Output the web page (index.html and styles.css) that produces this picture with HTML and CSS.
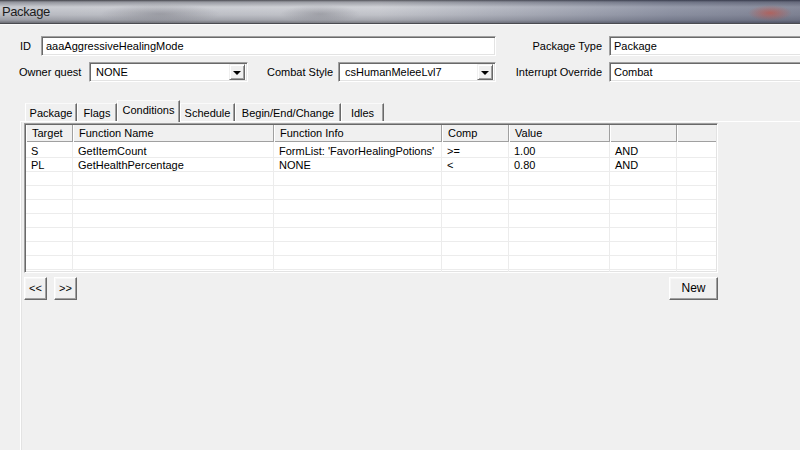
FILE: index.html
```html
<!DOCTYPE html>
<html lang="en">
<head>
  <meta charset="UTF-8" />
  <title>Package</title>
  <link rel="stylesheet" href="styles.css">
</head>
<body>
  <div class="window">
    <div class="titlebar"><span class="title">Package</span></div>

    <div class="form">
      <div class="row">
        <span class="lbl lbl-id">ID</span>
        <div class="field field-id">aaaAggressiveHealingMode</div>
        <span class="lbl lbl-right">Package Type</span>
        <div class="field field-wide">Package</div>
      </div>
      <div class="row">
        <span class="lbl lbl-owner">Owner quest</span>
        <div class="field combo combo-owner">
          <span class="combo-text">NONE</span>
          <span class="drop"><span class="arrow"></span></span>
        </div>
        <span class="lbl lbl-style">Combat Style</span>
        <div class="field combo combo-style">
          <span class="combo-text">csHumanMeleeLvl7</span>
          <span class="drop"><span class="arrow"></span></span>
        </div>
        <span class="lbl lbl-right">Interrupt Override</span>
        <div class="field field-wide">Combat</div>
      </div>
    </div>

    <div class="tabs">
      <div class="tab" style="width:52px">Package</div>
      <div class="tab" style="width:40px">Flags</div>
      <div class="tab active" style="width:63px">Conditions</div>
      <div class="tab" style="width:55px">Schedule</div>
      <div class="tab" style="width:106px">Begin/End/Change</div>
      <div class="tab" style="width:43px">Idles</div>
    </div>

    <div class="panel">
      <div class="list">
        <div class="list-head">
          <div class="hcell">Target</div>
          <div class="hcell">Function Name</div>
          <div class="hcell">Function Info</div>
          <div class="hcell">Comp</div>
          <div class="hcell">Value</div>
          <div class="hcell"></div>
          <div class="hcell last"></div>
        </div>
        <div class="list-body" id="rows"></div>
      </div>

      <div class="buttons">
        <div class="nav">
          <div class="btn btn-small">&lt;&lt;</div>
          <div class="btn btn-small">&gt;&gt;</div>
        </div>
        <div class="btn btn-new">New</div>
      </div>
    </div>
  </div>

  <script>
    // condition rows; the rest of the grid stays empty
    var conditions = [
      ['S', 'GetItemCount', "FormList: 'FavorHealingPotions'", '>=', '1.00', 'AND', ''],
      ['PL', 'GetHealthPercentage', 'NONE', '<', '0.80', 'AND', '']
    ];

    var body = document.getElementById('rows');
    for (var i = 0; i < 10; i++) {
      var data = conditions[i] || ['', '', '', '', '', '', ''];
      var row = document.createElement('div');
      row.className = 'lrow';
      data.forEach(function (text) {
        var cell = document.createElement('div');
        cell.className = 'cell';
        cell.textContent = text;
        row.appendChild(cell);
      });
      body.appendChild(row);
    }
  </script>
</body>
</html>
```

FILE: styles.css
```css
body {
  margin: 0;
  background-color: #f0f0f0;
  font-family: 'Liberation Sans', Arial, sans-serif;
  font-size: 11px;
  color: #000;
  overflow: hidden;
}
.window {
  width: 840px;
  height: 450px;
}

/* glass caption bar */
.titlebar {
  height: 23px;
  border-bottom: 1px solid #4a4b50;
  box-shadow: 0 1px 0 #fafafa;
  background:
    radial-gradient(ellipse 22px 8px at 770px 13px, rgba(210, 70, 50, 0.55), rgba(210, 70, 50, 0)),
    radial-gradient(ellipse 60px 10px at 160px 14px, rgba(90, 90, 100, 0.35), rgba(90, 90, 100, 0)),
    radial-gradient(ellipse 40px 9px at 320px 14px, rgba(80, 80, 90, 0.3), rgba(80, 80, 90, 0)),
    linear-gradient(90deg, rgba(255, 255, 255, 0) 0%, rgba(255, 255, 255, 0.12) 45%, rgba(50, 60, 95, 0.35) 80%, rgba(45, 50, 80, 0.45) 100%),
    linear-gradient(180deg, #3d3e45 0, #8f9199 2px, #c9cbd1 7px, #b7b9c0 15px, #9b9da5 20px, #6c6d74 23px);
}
.title {
  display: inline-block;
  padding: 4px 0 0 2px;
  font-size: 13px;
  color: #1c1c1c;
  letter-spacing: -0.4px;
}

/* top form */
.form {
  padding-top: 12px;
  display: flex;
  flex-direction: column;
  gap: 6px;
}
.row {
  display: flex;
  align-items: center;
  height: 20px;
}
.lbl {
  white-space: nowrap;
}
.lbl-id {
  width: 21px;
  padding-left: 20px;
}
.lbl-owner {
  width: 70px;
  padding-left: 19px;
}
.lbl-style {
  width: 71px;
  padding-left: 19px;
}
.lbl-right {
  width: 106px;
  padding-right: 7px;
  text-align: right;
}
.field {
  box-sizing: border-box;
  height: 20px;
  background: #fff;
  border: 1px solid;
  border-color: #a0a0a0 #fff #fff #a0a0a0;
  box-shadow: inset 1px 1px 0 #696969, inset -1px -1px 0 #e3e3e3;
  padding-left: 4px;
  line-height: 18px;
  white-space: nowrap;
  overflow: hidden;
}
.field-id {
  width: 455px;
}
.field-wide {
  width: 220px;
}
.combo {
  display: flex;
  justify-content: space-between;
  padding-right: 2px;
}
.combo-owner {
  width: 159px;
}
.combo-style {
  width: 158px;
}
.combo-text {
  padding-left: 2px;
}
.drop {
  box-sizing: border-box;
  width: 16px;
  height: 16px;
  margin-top: 1px;
  background: #f0f0f0;
  border: 1px solid;
  border-color: #f0f0f0 #696969 #696969 #f0f0f0;
  box-shadow: inset 1px 1px 0 #fff, inset -1px -1px 0 #a0a0a0;
  display: flex;
  align-items: center;
  justify-content: center;
}
.arrow {
  width: 0;
  height: 0;
  border-left: 4px solid transparent;
  border-right: 4px solid transparent;
  border-top: 4px solid #000;
  margin-top: 1px;
}

/* tab strip */
.tabs {
  display: flex;
  align-items: flex-end;
  height: 22px;
  margin-top: 17px;
  padding-left: 25px;
}
.tab {
  box-sizing: border-box;
  height: 18px;
  line-height: 18px;
  text-align: center;
  border-left: 1px solid #fff;
  border-top: 1px solid #fafafa;
  border-right: 1px solid #696969;
  box-shadow: inset -1px 0 0 #a0a0a0;
  white-space: nowrap;
}
.tab.active {
  height: 22px;
  line-height: 18px;
  position: relative;
  top: 1px;
  background: #f0f0f0;
}

/* page body of the tab control */
.panel {
  margin-left: 20px;
  height: 340px;
  border-top: 1px solid #fff;
  border-left: 1px solid #fff;
  box-shadow: inset 1px 0 0 #e3e3e3;
  padding: 1px 0 0 3px;
}

/* conditions list */
.list {
  box-sizing: border-box;
  width: 694px;
  height: 150px;
  background: #fff;
  border: 1px solid;
  border-color: #a0a0a0 #fff #fff #a0a0a0;
  box-shadow: inset 1px 1px 0 #696969, inset -1px -1px 0 #e3e3e3;
  padding: 1px;
  overflow: hidden;
}
.list-head,
.lrow {
  display: grid;
  grid-template-columns: 47px 201px 168px 67px 101px 67px 1fr;
}
.list-head {
  height: 17px;
  background: #f0f0f0;
  border-bottom: 1px solid #a0a0a0;
  box-sizing: border-box;
}
.hcell {
  border-right: 1px solid #a0a0a0;
  box-shadow: inset 1px 0 0 #fff;
  padding-left: 6px;
  line-height: 17px;
  white-space: nowrap;
}
.hcell.last {
  border-right: none;
}
.list-body {
  height: 130px;
  overflow: hidden;
}
.lrow {
  box-sizing: border-box;
  height: 14px;
  border-bottom: 1px solid #ececec;
}
.lrow:first-child {
  height: 16px;
  padding-top: 2px;
}
.lrow:first-child .cell {
  margin-top: -2px;
  padding-top: 2px;
}
.cell {
  border-right: 1px solid #ececec;
  padding-left: 5px;
  line-height: 14px;
  white-space: nowrap;
  overflow: hidden;
}
.cell:last-child {
  border-right: none;
}

/* buttons under the list */
.buttons {
  width: 694px;
  margin-top: 4px;
  display: flex;
  justify-content: space-between;
}
.nav {
  display: flex;
  gap: 7px;
}
.btn {
  box-sizing: border-box;
  height: 23px;
  background: #f0f0f0;
  border: 1px solid;
  border-color: #fff #696969 #696969 #fff;
  box-shadow: inset -1px -1px 0 #a0a0a0, inset 1px 1px 0 #f7f7f7;
  text-align: center;
  line-height: 21px;
}
.btn-small {
  width: 23px;
}
.btn-new {
  width: 49px;
  font-size: 12px;
}
```
